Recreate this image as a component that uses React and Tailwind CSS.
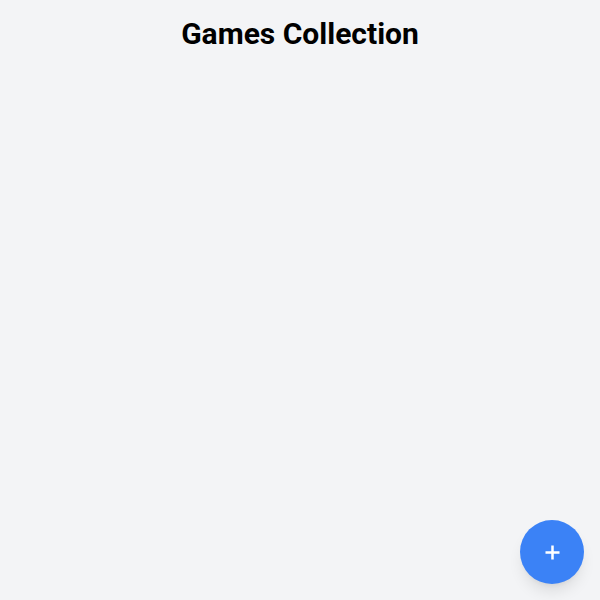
import React from "react";

export default function App() {
  return (
    <div className="min-h-screen w-full bg-[#f3f4f6] relative" style={{ fontFamily: "Roboto, sans-serif" }}>
      <div className="p-4">
        <h1 className="text-3xl font-bold text-center text-black">Games Collection</h1>
      </div>
      <button className="fixed right-4 bottom-4 w-16 h-16 rounded-full bg-[#3b82f6] shadow-lg flex items-center justify-center text-white">
        <svg width="15" height="15" viewBox="0 0 15 15" fill="none" stroke="white" strokeWidth="2.5">
          <path d="M7.5 0.5v14M0.5 7.5h14" />
        </svg>
      </button>
    </div>
  );
}
